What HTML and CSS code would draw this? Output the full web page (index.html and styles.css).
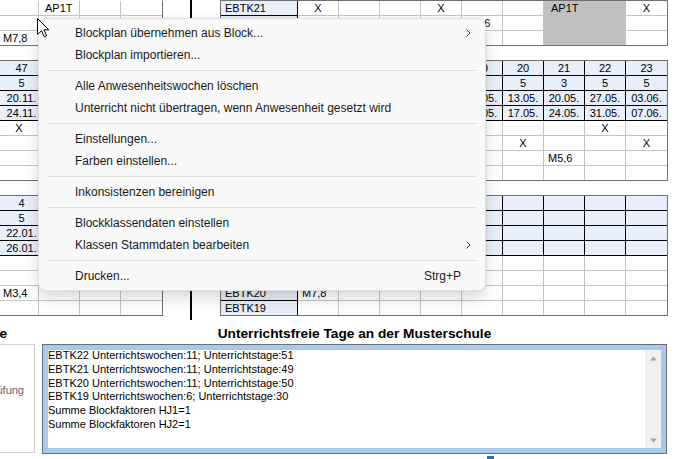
FILE: index.html
```html
<!DOCTYPE html>
<html lang="de">
<head>
<meta charset="utf-8">
<title>Blockplan</title>
<link rel="stylesheet" href="styles.css">
</head>
<body>
<div class="workspace">
  <div class="pane-left">
    <div class="sheet r3 cut">
      <div class="c"></div><div class="c l6">AP1T</div><div class="c"></div><div class="c"></div>
      <div class="c"></div><div class="c"></div><div class="c"></div><div class="c"></div>
      <div class="c l">M7,8</div><div class="c"></div><div class="c"></div><div class="c"></div>
    </div>
    <div class="sheet r8">
      <div class="h f">47</div><div class="h"></div><div class="h"></div><div class="h"></div>
      <div class="h f">5</div><div class="h"></div><div class="h"></div><div class="h"></div>
      <div class="h f">20.11.</div><div class="h"></div><div class="h"></div><div class="h"></div>
      <div class="h f">24.11.</div><div class="h"></div><div class="h"></div><div class="h"></div>
      <div class="c">X</div><div class="c"></div><div class="c"></div><div class="c"></div>
      <div class="c"></div><div class="c"></div><div class="c"></div><div class="c"></div>
      <div class="c"></div><div class="c"></div><div class="c"></div><div class="c"></div>
      <div class="c"></div><div class="c"></div><div class="c"></div><div class="c"></div>
    </div>
    <div class="sheet r8">
      <div class="h f">4</div><div class="h"></div><div class="h"></div><div class="h"></div>
      <div class="h f">5</div><div class="h"></div><div class="h"></div><div class="h"></div>
      <div class="h f">22.01.</div><div class="h"></div><div class="h"></div><div class="h"></div>
      <div class="h f">26.01.</div><div class="h"></div><div class="h"></div><div class="h"></div>
      <div class="c"></div><div class="c"></div><div class="c"></div><div class="c"></div>
      <div class="c"></div><div class="c"></div><div class="c"></div><div class="c"></div>
      <div class="c l">M3,4</div><div class="c"></div><div class="c"></div><div class="c"></div>
      <div class="c"></div><div class="c"></div><div class="c"></div><div class="c"></div>
    </div>
  </div>
  <div class="splitter"></div>
  <div class="pane-right">
    <div class="sheet r3">
      <div class="g">AP1T</div>
      <div class="k">EBTK21</div><div class="c">X</div><div class="c"></div><div class="c"></div><div class="c">X</div><div class="c"></div><div class="c"></div><div class="c">X</div>
      <div class="k"></div><div class="c"></div><div class="c"></div><div class="c"></div><div class="c"></div><div class="c l">M5,6</div><div class="c"></div><div class="c"></div>
      <div class="k"></div><div class="c"></div><div class="c"></div><div class="c"></div><div class="c"></div><div class="c"></div><div class="c"></div><div class="c"></div>
    </div>
    <div class="sheet r8">
      <div class="h"></div><div class="h"></div><div class="h"></div><div class="h"></div><div class="h"></div><div class="h">19</div><div class="h">20</div><div class="h">21</div><div class="h">22</div><div class="h">23</div>
      <div class="h"></div><div class="h"></div><div class="h"></div><div class="h"></div><div class="h"></div><div class="h">3</div><div class="h">5</div><div class="h">3</div><div class="h">5</div><div class="h">5</div>
      <div class="h"></div><div class="h"></div><div class="h"></div><div class="h"></div><div class="h"></div><div class="h">06.05.</div><div class="h">13.05.</div><div class="h">20.05.</div><div class="h">27.05.</div><div class="h">03.06.</div>
      <div class="h"></div><div class="h"></div><div class="h"></div><div class="h"></div><div class="h"></div><div class="h">10.05.</div><div class="h">17.05.</div><div class="h">24.05.</div><div class="h">31.05.</div><div class="h">07.06.</div>
      <div class="k"></div><div class="c"></div><div class="c"></div><div class="c"></div><div class="c"></div><div class="c"></div><div class="c"></div><div class="c"></div><div class="c">X</div><div class="c"></div>
      <div class="k"></div><div class="c"></div><div class="c"></div><div class="c"></div><div class="c"></div><div class="c"></div><div class="c">X</div><div class="c"></div><div class="c"></div><div class="c">X</div>
      <div class="k"></div><div class="c"></div><div class="c"></div><div class="c"></div><div class="c"></div><div class="c"></div><div class="c"></div><div class="c l">M5,6</div><div class="c"></div><div class="c"></div>
      <div class="k"></div><div class="c"></div><div class="c"></div><div class="c"></div><div class="c"></div><div class="c"></div><div class="c"></div><div class="c"></div><div class="c"></div><div class="c"></div>
    </div>
    <div class="sheet r8">
      <div class="h"></div><div class="h"></div><div class="h"></div><div class="h"></div><div class="h"></div><div class="h"></div><div class="h"></div><div class="h"></div><div class="h"></div><div class="h"></div>
      <div class="h"></div><div class="h"></div><div class="h"></div><div class="h"></div><div class="h"></div><div class="h"></div><div class="h"></div><div class="h"></div><div class="h"></div><div class="h"></div>
      <div class="h"></div><div class="h"></div><div class="h"></div><div class="h"></div><div class="h"></div><div class="h"></div><div class="h"></div><div class="h"></div><div class="h"></div><div class="h"></div>
      <div class="h"></div><div class="h"></div><div class="h"></div><div class="h"></div><div class="h"></div><div class="h"></div><div class="h"></div><div class="h"></div><div class="h"></div><div class="h"></div>
      <div class="k"></div><div class="c"></div><div class="c"></div><div class="c"></div><div class="c"></div><div class="c"></div><div class="c"></div><div class="c"></div><div class="c"></div><div class="c"></div>
      <div class="k"></div><div class="c"></div><div class="c"></div><div class="c"></div><div class="c"></div><div class="c"></div><div class="c"></div><div class="c"></div><div class="c"></div><div class="c"></div>
      <div class="k">EBTK20</div><div class="c l">M7,8</div><div class="c"></div><div class="c"></div><div class="c"></div><div class="c"></div><div class="c"></div><div class="c"></div><div class="c"></div><div class="c"></div>
      <div class="k">EBTK19</div><div class="c"></div><div class="c"></div><div class="c"></div><div class="c"></div><div class="c"></div><div class="c"></div><div class="c"></div><div class="c"></div><div class="c"></div>
    </div>
  </div>
</div>

<div class="bottom">
  <div class="legend">
    <div class="cap"><span>Legende</span></div>
    <div class="legend-box">
      <div class="legend-item"><span>Abschlussprüfung</span></div>
    </div>
  </div>
  <div class="notes-col">
    <div class="cap"><span>Unterrichtsfreie Tage an der Musterschule</span></div>
    <div class="notes">
      <div class="notes-inner">
        <div class="notes-text">
          <div>EBTK22 Unterrichtswochen:11; Unterrichtstage:51</div>
          <div>EBTK21 Unterrichtswochen:11; Unterrichtstage:49</div>
          <div>EBTK20 Unterrichtswochen:11; Unterrichtstage:50</div>
          <div>EBTK19 Unterrichtswochen:6; Unterrichtstage:30</div>
          <div>Summe Blockfaktoren HJ1=1</div>
          <div>Summe Blockfaktoren HJ2=1</div>
        </div>
        <div class="vscroll">
          <svg width="7" height="5" viewBox="0 0 7 5"><polygon points="0,4.5 3.5,0.5 7,4.5" fill="#a3a3a3"/></svg>
          <svg width="7" height="5" viewBox="0 0 7 5"><polygon points="0,0.5 7,0.5 3.5,4.5" fill="#a3a3a3"/></svg>
        </div>
      </div>
    </div>
    <div class="chk"></div>
  </div>
</div>

<div class="menu">
  <div class="mi"><span class="lbl">Blockplan übernehmen aus Block...</span><svg class="chev" width="5" height="8" viewBox="0 0 5 8"><polyline points="0.5,0.5 4,4 0.5,7.5" fill="none" stroke="#3c3c3c" stroke-width="1"/></svg></div>
  <div class="mi"><span class="lbl">Blockplan importieren...</span></div>
  <div class="sep"></div>
  <div class="mi"><span class="lbl">Alle Anwesenheitswochen löschen</span></div>
  <div class="mi"><span class="lbl">Unterricht nicht übertragen, wenn Anwesenheit gesetzt wird</span></div>
  <div class="sep"></div>
  <div class="mi"><span class="lbl">Einstellungen...</span></div>
  <div class="mi"><span class="lbl">Farben einstellen...</span></div>
  <div class="sep"></div>
  <div class="mi"><span class="lbl">Inkonsistenzen bereinigen</span></div>
  <div class="sep"></div>
  <div class="mi"><span class="lbl">Blockklassendaten einstellen</span></div>
  <div class="mi"><span class="lbl">Klassen Stammdaten bearbeiten</span><svg class="chev" width="5" height="8" viewBox="0 0 5 8"><polyline points="0.5,0.5 4,4 0.5,7.5" fill="none" stroke="#3c3c3c" stroke-width="1"/></svg></div>
  <div class="sep"></div>
  <div class="mi"><span class="lbl">Drucken...</span><span class="key">Strg+P</span></div>
</div>

<svg class="cursor" width="13" height="20" viewBox="0 0 13 20">
  <polygon points="0.5,0.5 0.5,16.5 4.5,12.8 7.2,18.8 9.6,17.8 7,11.8 11.8,11.8" fill="#fff" stroke="#000" stroke-width="1" stroke-linejoin="miter"/>
</svg>
</body>
</html>
```

FILE: styles.css
```css
* { box-sizing: border-box; }

html, body { margin: 0; padding: 0; }

body {
  width: 675px;
  height: 459px;
  overflow: hidden;
  position: relative;
  background: #ffffff;
  color: #000;
  font-family: "Liberation Sans", Arial, sans-serif;
  font-size: 11px;
}

/* ---------- grid workspace ---------- */
.workspace {
  display: flex;
  height: 320px;
}

.pane-left {
  width: 190px;
  flex: none;
  overflow: hidden;
}

.splitter {
  width: 2px;
  flex: none;
  background: #000;
}

.pane-right {
  flex: 1;
  padding-left: 28px;
  overflow: hidden;
}

.sheet {
  display: grid;
  grid-auto-rows: 15px;
  border: 1px solid #6f6f6f;
  overflow: hidden;
  background: #fff;
}

.sheet + .sheet { margin-top: 14px; }

.sheet.r3 { height: 46px; }
.sheet.r8 { height: 121px; }
.sheet.cut { border-top-color: transparent; }

.pane-left .sheet {
  width: 164px;
  margin-left: -1px;
  grid-template-columns: 39px 41px 41px 42px;
}

.pane-right .sheet {
  width: 448px;
  grid-template-columns: 77px repeat(8, 41px) 42px;
}

.c, .h, .k, .g {
  border-right: 1px solid #c4c4c4;
  border-bottom: 1px solid #c4c4c4;
  line-height: 14px;
  white-space: nowrap;
  overflow: hidden;
  text-align: center;
}

.h {
  background: #e8eefa;
  border-color: #000;
}

.h.f { padding-left: 5px; }

.k {
  background: #e8eefa;
  border-color: #000;
  text-align: left;
  padding-left: 4px;
}

.l { text-align: left; padding-left: 4px; }
.pane-left .l { padding-left: 3px; }
.l6 { text-align: left; padding-left: 6px; }

.g {
  grid-column: 8 / span 2;
  grid-row: 1 / span 3;
  background: #c0c0c0;
  border-bottom: none;
  text-align: left;
  padding-left: 7px;
}

/* ---------- bottom area ---------- */
.bottom {
  display: flex;
  gap: 7px;
  padding-top: 6px;
}

.legend { width: 35px; flex: none; }
.notes-col { width: 625px; flex: none; }

.cap {
  display: flex;
  justify-content: center;
  height: 16px;
  line-height: 16px;
  margin-bottom: 2px;
  font-weight: bold;
  font-size: 13.7px;
  white-space: nowrap;
}

.legend .cap {
  justify-content: flex-end;
  padding-right: 28px;
}

.legend-box {
  height: 109px;
  margin-top: 1px;
  border: 1px solid #d2d2d2;
  border-left: none;
  padding-top: 38px;
}

.legend-item {
  display: flex;
  justify-content: flex-end;
  padding-right: 10px;
  line-height: 14px;
  color: #666;
  white-space: nowrap;
}

.notes {
  height: 110px;
  border: 1px solid #6e6e6e;
}

.notes-inner {
  height: 100%;
  display: flex;
  border: 5px solid #a8c8ee;
  background: #fff;
}

.notes-text {
  flex: 1;
  margin-top: -1px;
  line-height: 13.8px;
  white-space: nowrap;
}

.vscroll {
  width: 16px;
  flex: none;
  background: #f0f0f0;
  display: flex;
  flex-direction: column;
  align-items: center;
  justify-content: space-between;
  padding: 6px 0 5px;
}

.vscroll svg { display: block; }

.chk {
  width: 7px;
  height: 4px;
  margin-top: 2px;
  margin-left: 445px;
  background: #1e6fd0;
}

/* ---------- context menu ---------- */
.menu {
  position: absolute;
  left: 38px;
  top: 18px;
  width: 448px;
  padding: 3px 0 3px;
  background: #f9f9f9;
  border: 1px solid #e0e0e0;
  border-radius: 8px;
  box-shadow: 0 8px 16px rgba(0, 0, 0, 0.14), 0 0 3px rgba(0, 0, 0, 0.08);
  font-family: "Liberation Sans", Arial, sans-serif;
  font-size: 12px;
  color: #1a1a1a;
}

.mi {
  height: 22px;
  display: flex;
  align-items: center;
  padding: 0 14px 0 36px;
  white-space: nowrap;
}

.mi .lbl { flex: 1; }
.mi .key { margin-right: 10px; }
.mi .chev { display: block; }

.sep {
  height: 1px;
  margin: 4px 8px;
  background: #e0e0e0;
}

.cursor {
  position: absolute;
  left: 37px;
  top: 18px;
}
```
